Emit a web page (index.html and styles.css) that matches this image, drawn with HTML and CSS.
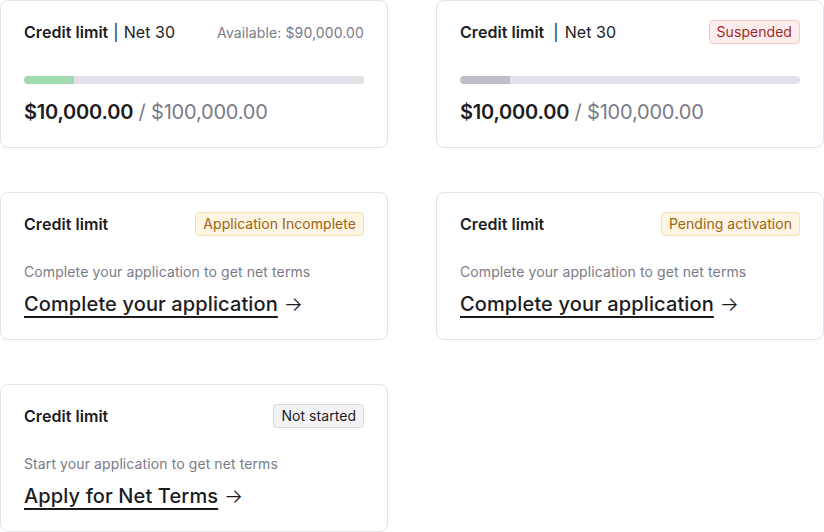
FILE: index.html
```html
<!DOCTYPE html>
<html lang="en">
<head>
    <meta charset="UTF-8">
    <title>Credit limit</title>
    <link rel="stylesheet" href="styles.css">
</head>
<body>
    <div class="grid">
        <!-- Active -->
        <div class="card">
            <div class="card-head">
                <div class="title"><b>Credit limit</b><span class="sep">|</span>Net 30</div>
                <div class="available">Available: $90,000.00</div>
            </div>
            <div class="bar"><div class="bar-fill green" style="width: 50px"></div></div>
            <div class="amount"><b>$10,000.00</b> <span class="total">/ $100,000.00</span></div>
        </div>

        <!-- Suspended -->
        <div class="card">
            <div class="card-head">
                <div class="title"><b>Credit limit</b><span class="sep wide">|</span>Net 30</div>
                <span class="badge red">Suspended</span>
            </div>
            <div class="bar"><div class="bar-fill grey" style="width: 50px"></div></div>
            <div class="amount"><b>$10,000.00</b> <span class="total">/ $100,000.00</span></div>
        </div>

        <div class="card">
            <div class="card-head">
                <div class="title"><b>Credit limit</b></div>
                <span class="badge amber">Application Incomplete</span>
            </div>
            <div class="hint">Complete your application to get net terms</div>
            <div class="cta"><a href="#">Complete your application</a> <span class="arrow">→</span></div>
        </div>

        <div class="card">
            <div class="card-head">
                <div class="title"><b>Credit limit</b></div>
                <span class="badge amber">Pending activation</span>
            </div>
            <div class="hint">Complete your application to get net terms</div>
            <div class="cta"><a href="#">Complete your application</a> <span class="arrow">→</span></div>
        </div>

        <div class="card">
            <div class="card-head">
                <div class="title"><b>Credit limit</b></div>
                <span class="badge neutral">Not started</span>
            </div>
            <div class="hint">Start your application to get net terms</div>
            <div class="cta"><a href="#">Apply for Net Terms</a> <span class="arrow">→</span></div>
        </div>
    </div>
</body>
</html>
```

FILE: styles.css
```css
body {
    margin: 0;
    font-family: Inter, "Noto Sans", sans-serif;
    color: #1c1c1f;
    background: #fff;
}

.grid {
    display: grid;
    grid-template-columns: 388px 388px;
    column-gap: 48px;
    row-gap: 44px;
}

.card {
    box-sizing: border-box;
    height: 148px;
    border: 1px solid #e2e2e8;
    border-radius: 8px;
    padding: 19px 23px;
    display: flex;
    flex-direction: column;
}

.card-head {
    display: flex;
    justify-content: space-between;
    align-items: center;
    height: 24px;
}

.title {
    font-size: 16px;
    line-height: 24px;
    letter-spacing: 0.05px;
}

.title b {
    font-weight: 600;
}

.sep {
    margin: 0 5px 0 5px;
    color: #1c1c1f;
}

.sep.wide {
    margin: 0 6px 0 9px;
}

.available {
    font-size: 14px;
    color: #7a7b87;
    letter-spacing: 0.12px;
}

.badge {
    box-sizing: border-box;
    height: 24px;
    line-height: 22px;
    padding: 0 7px;
    font-size: 14px;
    border-radius: 4px;
    border: 1px solid;
    letter-spacing: 0.05px;
}

.badge.red {
    background: #fdecec;
    border-color: #f7c9c9;
    color: #9d2b2b;
}

.badge.amber {
    background: #fef4e2;
    border-color: #f8dfae;
    color: #9a6415;
}

.badge.neutral {
    background: #f3f3f6;
    border-color: #d9dae1;
    color: #1c1c1f;
}

.bar {
    margin-top: 32px;
    height: 8px;
    border-radius: 4px;
    background: #e1e1e7;
    overflow: hidden;
}

.bar-fill {
    height: 100%;
}

.bar-fill.green {
    background: #a3dbb0;
}

.bar-fill.grey {
    background: #bdbfcb;
}

.amount {
    margin-top: 14px;
    font-size: 20px;
    line-height: 28px;
    letter-spacing: -0.2px;
}

.amount b {
    font-weight: 600;
}

.total {
    color: #7a7b87;
}

.hint {
    margin-top: 26px;
    font-size: 14px;
    line-height: 20px;
    color: #7a7b87;
    letter-spacing: 0.1px;
}

.cta {
    margin-top: 8px;
    font-size: 20px;
    line-height: 28px;
    letter-spacing: 0.12px;
}

.cta a {
    color: #1c1c1f;
    font-weight: 500;
    text-decoration: underline;
    text-decoration-thickness: 2px;
    text-underline-offset: 5px;
}

.arrow {
    font-weight: 300;
}
```
